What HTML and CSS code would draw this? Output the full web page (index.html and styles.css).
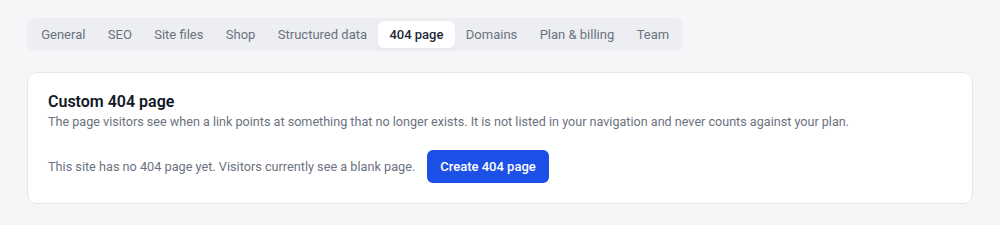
FILE: index.html
```html
<!DOCTYPE html>
<html lang="en">
<head>
    <meta charset="UTF-8">
    <meta name="viewport" content="width=device-width, initial-scale=1.0">
    <title>Settings - 404 page</title>
    <link rel="stylesheet" href="styles.css">
</head>
<body>
    <div class="settings">
        <nav class="tabs">
            <a class="tab" href="#">General</a>
            <a class="tab" href="#">SEO</a>
            <a class="tab" href="#">Site files</a>
            <a class="tab" href="#">Shop</a>
            <a class="tab" href="#">Structured data</a>
            <a class="tab active" href="#">404 page</a>
            <a class="tab" href="#">Domains</a>
            <a class="tab" href="#">Plan &amp; billing</a>
            <a class="tab" href="#">Team</a>
        </nav>

        <section class="card">
            <h2 class="card-title">Custom 404 page</h2>
            <p class="card-desc">The page visitors see when a link points at something that no longer exists. It is not listed in your navigation and never counts against your plan.</p>
            <div class="empty-row">
                <span class="empty-text">This site has no 404 page yet. Visitors currently see a blank page.</span>
                <button type="button" class="btn-primary">Create 404 page</button>
            </div>
        </section>
    </div>
</body>
</html>
```

FILE: styles.css
```css
* {
    box-sizing: border-box;
}
body {
    margin: 0;
    background-color: #f5f6f8;
    font-family: Roboto, 'Noto Sans', sans-serif;
    color: #111827;
}
.settings {
    padding: 18px 27px;
}

/* tab strip */
.tabs {
    display: inline-flex;
    padding: 3px;
    background-color: #eceef2;
    border-radius: 8px;
}
.tab {
    display: flex;
    align-items: center;
    height: 27px;
    padding: 0 11.2px;
    font-size: 13px;
    color: #6b7280;
    text-decoration: none;
    border-radius: 6px;
}
.tab.active {
    background-color: #ffffff;
    color: #1f2937;
    font-weight: 500;
    box-shadow: 0 1px 2px rgba(17, 24, 39, 0.04);
}

/* card */
.card {
    margin-top: 21px;
    padding: 18px 20px 20px;
    background-color: #ffffff;
    border: 1px solid #e4e6eb;
    border-radius: 10px;
}
.card-title {
    margin: 0;
    font-size: 16px;
    line-height: 22px;
    font-weight: 600;
    color: #111827;
}
.card-desc {
    margin: -1px 0 0;
    font-size: 12.6px;
    line-height: 20px;
    color: #6b7280;
}
.empty-row {
    display: flex;
    align-items: center;
    gap: 12px;
    margin-top: 18px;
}
.empty-text {
    font-size: 12.7px;
    color: #6b7280;
}
.btn-primary {
    height: 33px;
    padding: 0 13px;
    background-color: #1d50e6;
    color: #ffffff;
    border: none;
    border-radius: 6px;
    font-family: inherit;
    font-size: 13px;
    font-weight: 500;
}
```
